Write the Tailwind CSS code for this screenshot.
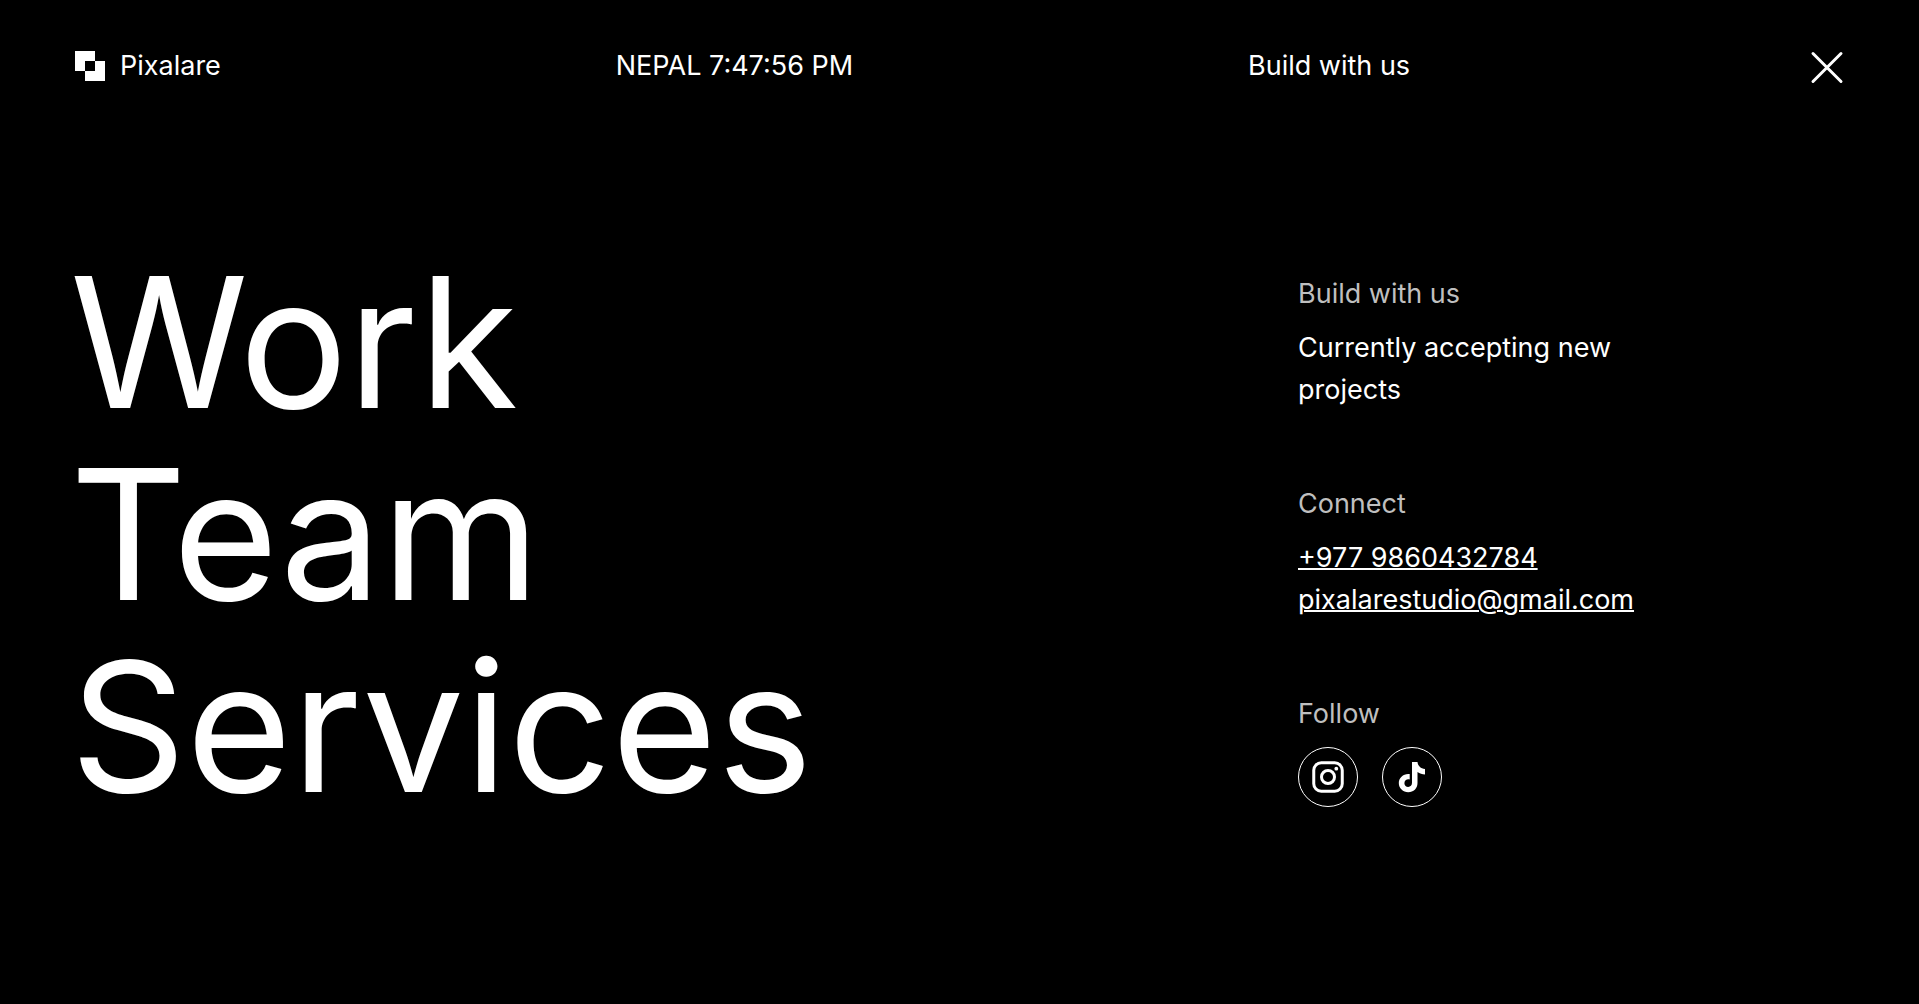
<!DOCTYPE html>
<html lang="en">
<head>
    <meta charset="UTF-8">
    <meta name="viewport" content="width=device-width, initial-scale=1.0">
    <title>Pixalare</title>
    <script src="https://cdn.jsdelivr.net/npm/@tailwindcss/browser@4"></script>
</head>
<body class="min-h-screen bg-black text-white font-['Inter',sans-serif] text-[27px] leading-[42px]">
    <header class="flex items-center justify-between px-[74px] pt-[45px]">
        <a href="#" class="flex items-center gap-3.5">
            <svg class="size-8" viewBox="0 0 32 32" fill="currentColor" aria-hidden="true">
                <path fill-rule="evenodd" d="M1 1h20v10h10v20H11V21H1zM11 11v10h10V11z"/>
            </svg>
            <span>Pixalare</span>
        </a>
        <p>NEPAL <time>7:47:56 PM</time></p>
        <a href="#contact">Build with us</a>
        <button type="button" aria-label="Close menu">
            <svg class="size-10" viewBox="0 0 40 40" fill="none" stroke="currentColor" stroke-width="3" stroke-linecap="round" aria-hidden="true">
                <path d="M8 7.500l28 28M36 7.500L8 35.500"/>
            </svg>
        </button>
    </header>

    <main class="flex flex-wrap justify-between pr-[74px] pl-[70px] pt-[160px]">
        <nav class="flex flex-col items-start text-[181px] leading-[192px]">
            <a href="#work">Work</a>
            <a href="#team">Team</a>
            <a href="#services">Services</a>
        </nav>

        <aside class="flex w-[547px] flex-col gap-[72px] pt-[26px]">
            <section class="flex flex-col gap-3">
                <h2 class="text-[#bfbfbf]">Build with us</h2>
                <p class="max-w-[360px]">Currently accepting new projects</p>
            </section>

            <section class="flex flex-col gap-3">
                <h2 class="text-[#bfbfbf]">Connect</h2>
                <div class="flex flex-col items-start">
                    <a href="tel:+9779860432784" class="underline decoration-2">+977 9860432784</a>
                    <a href="mailto:pixalarestudio@gmail.com" class="underline decoration-2">pixalarestudio@gmail.com</a>
                </div>
            </section>

            <section class="flex flex-col gap-3">
                <h2 class="text-[#bfbfbf]">Follow</h2>
                <div class="flex gap-6">
                    <a href="#instagram" aria-label="Instagram" class="flex size-15 items-center justify-center rounded-full border border-white">
                        <svg class="size-8" viewBox="0 0 32 32" fill="none" stroke="currentColor" stroke-width="3" aria-hidden="true">
                            <rect x="1.750" y="1.750" width="28.500" height="28.500" rx="7.500"/>
                            <circle cx="16" cy="16" r="6.500"/>
                            <circle cx="24.300" cy="7.700" r="1.900" fill="currentColor" stroke="none"/>
                        </svg>
                    </a>
                    <a href="#tiktok" aria-label="TikTok" class="flex size-15 items-center justify-center rounded-full border border-white">
                        <svg class="size-8" viewBox="0 0 32 32" fill="currentColor" aria-hidden="true">
                            <path d="M16 1h5.500c.4 3.900 3.200 6.700 7.500 7v5.500c-2.700-.2-5.400-1-7.500-2.500v11c0 5.300-3.900 9.300-9.300 9.300-5.100 0-9.400-3.900-9.400-9.200 0-5.600 4.900-9.900 10.900-9.100v5.500c-2.700-.8-5.300 1-5.300 3.700 0 2.100 1.700 3.700 3.800 3.700 2.300 0 3.800-1.600 3.800-4.100z"/>
                        </svg>
                    </a>
                </div>
            </section>
        </aside>
    </main>
</body>
</html>
